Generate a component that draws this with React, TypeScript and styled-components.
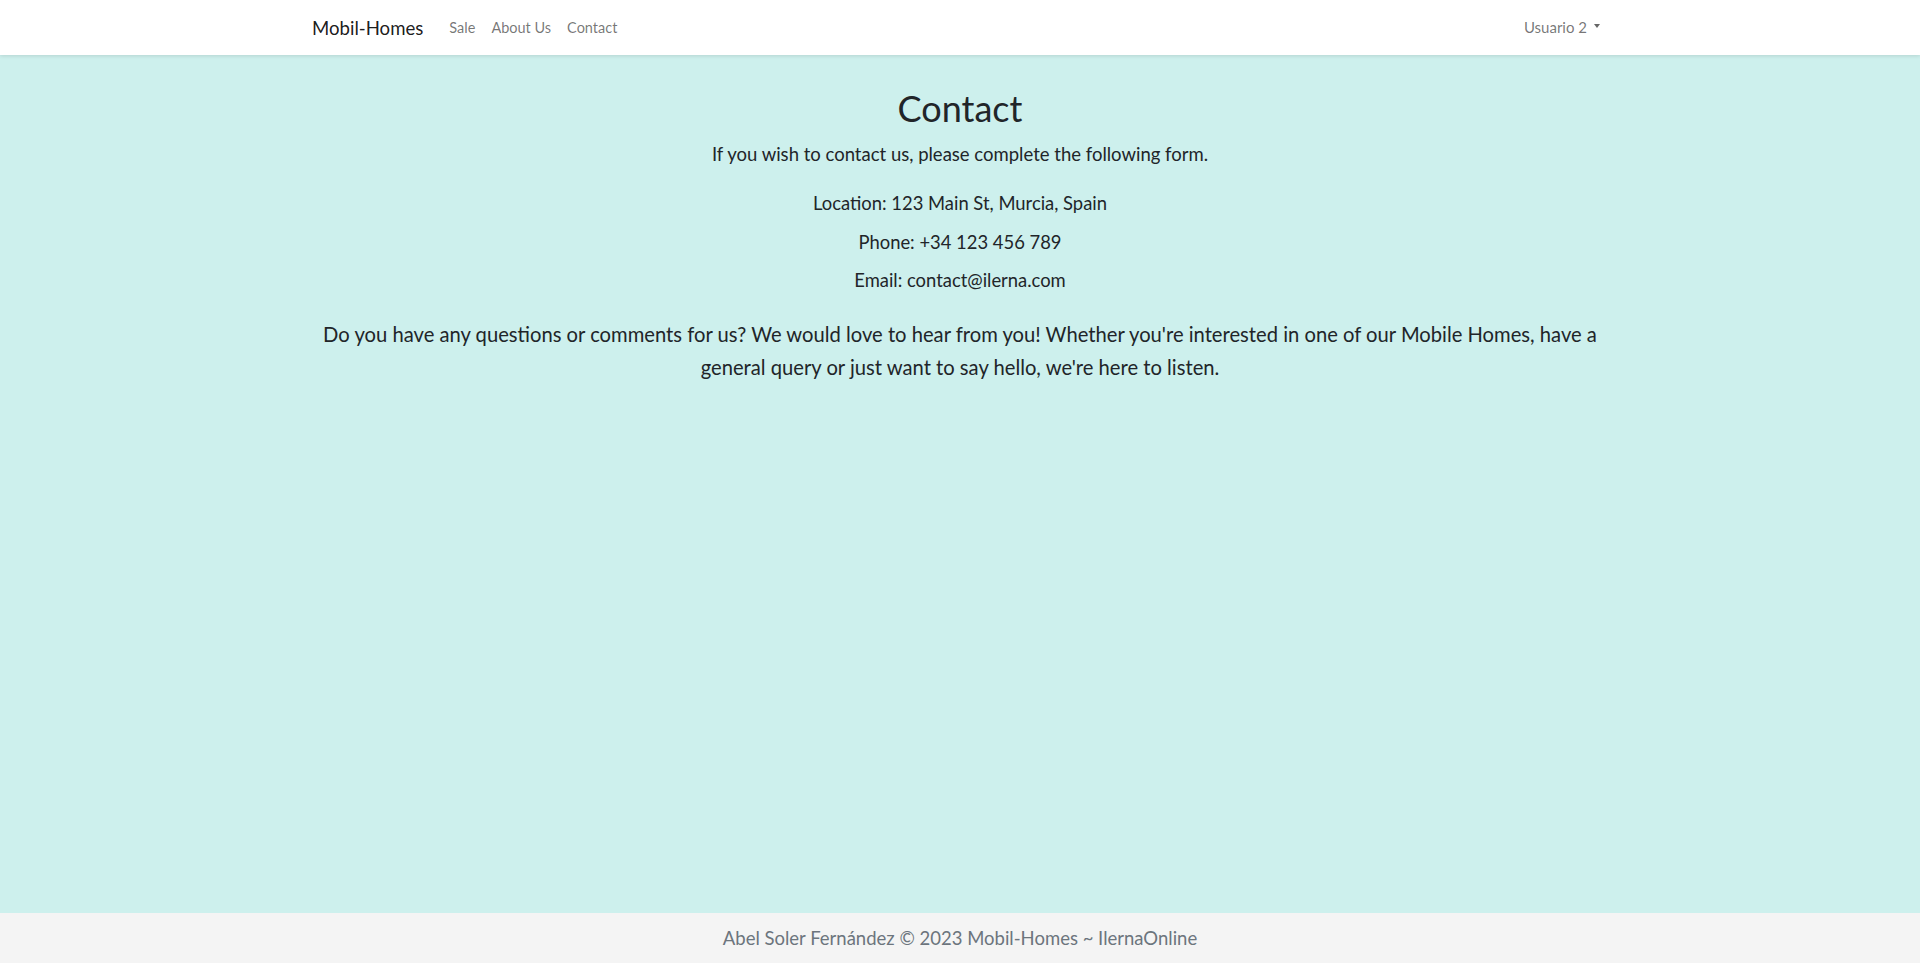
import React from "react";
import styled, { createGlobalStyle } from "styled-components";

const GlobalStyle = createGlobalStyle`
  html, body { margin: 0; padding: 0; }
  body {
    font-family: Lato, "Noto Sans", "Liberation Sans", sans-serif;
    color: #212529;
    background: #cdf0ed;
  }
  * { box-sizing: border-box; }
`;

const Page = styled.div`
  display: flex;
  flex-direction: column;
  min-height: 100vh;
`;

const Navbar = styled.nav`
  height: 55px;
  background: #ffffff;
  box-shadow: 0 1px 4px rgba(0, 0, 0, 0.12);
  position: relative;
  z-index: 1;
`;

const NavContainer = styled.div`
  width: 1320px;
  margin: 0 auto;
  padding: 0 12px;
  height: 100%;
  display: flex;
  align-items: center;
`;

const Brand = styled.a`
  font-size: 18.6px;
  color: rgba(0, 0, 0, 0.9);
  text-decoration: none;
  margin-right: 18px;
`;

const NavList = styled.ul`
  display: flex;
  list-style: none;
  margin: 0;
  padding: 0;
  flex: 1;
`;

const NavLink = styled.a`
  display: block;
  padding: 8px 8px;
  font-size: 14.5px;
  color: rgba(0, 0, 0, 0.55);
  text-decoration: none;
`;

const Dropdown = styled.a`
  display: flex;
  align-items: center;
  gap: 7px;
  padding: 7px 8px 9px;
  font-size: 15px;
  color: rgba(0, 0, 0, 0.55);
  text-decoration: none;
`;

const Caret = styled.span`
  width: 0;
  height: 0;
  border-left: 3.5px solid transparent;
  border-right: 3.5px solid transparent;
  border-top: 4px solid rgba(0, 0, 0, 0.6);
  margin-top: -2px;
`;

const Main = styled.main`
  flex: 1;
  background: #cdf0ed;
`;

const Content = styled.div`
  width: 1320px;
  margin: 0 auto;
  padding: 32px 12px 0;
  text-align: center;
`;

const Title = styled.h1`
  font-size: 36px;
  font-weight: 400;
  line-height: 1.2;
  margin: 0 0 12px;
  color: #212529;
`;

const Lead = styled.p`
  font-size: 18.5px;
  line-height: 24px;
  margin: 0 0 25px;
`;

const Info = styled.p`
  font-size: 18.4px;
  line-height: 24px;
  margin: 0 0 14.6px;
`;

const Message = styled.p`
  font-size: 20.2px;
  line-height: 33px;
  margin: 25.3px 0 0;
`;

const Footer = styled.footer`
  height: 50px;
  background: #f4f4f4;
  display: flex;
  align-items: center;
  justify-content: center;
  font-size: 18.5px;
  color: #6c757d;
`;

export default function App() {
  return (
    <Page>
      <GlobalStyle />
      <Navbar>
        <NavContainer>
          <Brand href="#">Mobil-Homes</Brand>
          <NavList>
            <li><NavLink href="#">Sale</NavLink></li>
            <li><NavLink href="#">About Us</NavLink></li>
            <li><NavLink href="#">Contact</NavLink></li>
          </NavList>
          <Dropdown href="#">
            Usuario 2 <Caret />
          </Dropdown>
        </NavContainer>
      </Navbar>
      <Main>
        <Content>
          <Title>Contact</Title>
          <Lead>If you wish to contact us, please complete the following form.</Lead>
          <Info>Location: 123 Main St, Murcia, Spain</Info>
          <Info>Phone: +34 123 456 789</Info>
          <Info>Email: contact@ilerna.com</Info>
          <Message>
            Do you have any questions or comments for us? We would love to hear from you! Whether you're
            interested in one of our Mobile Homes, have a general query or just want to say hello, we're
            here to listen.
          </Message>
        </Content>
      </Main>
      <Footer>Abel Soler Fernández © 2023 Mobil-Homes ~ IlernaOnline</Footer>
    </Page>
  );
}
